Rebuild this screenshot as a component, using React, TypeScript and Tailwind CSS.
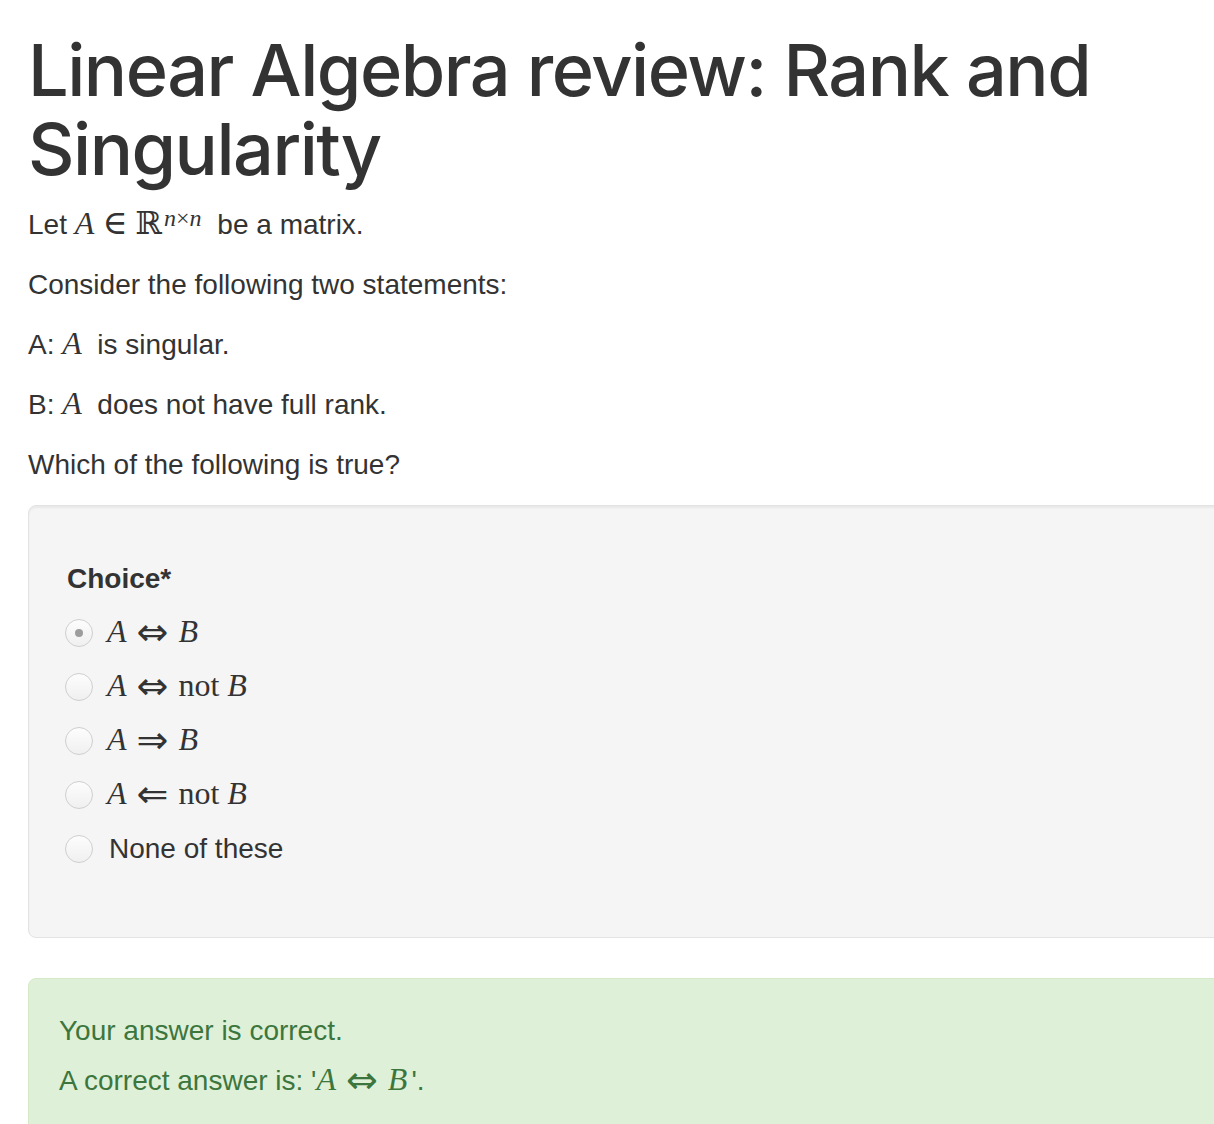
import React from "react";

const M = ({ children }: { children: React.ReactNode }) => (
  <span className="font-['Liberation_Serif','DejaVu_Serif',serif] text-[32px] leading-none">{children}</span>
);

const I = ({ children }: { children: React.ReactNode }) => <span className="italic">{children}</span>;

const Op = ({ children, small }: { children: React.ReactNode; small?: boolean }) => (
  <span
    className={
      small
        ? "font-['DejaVu_Serif',serif] text-[34px] leading-[0] mx-[8px] not-italic"
        : "font-['DejaVu_Sans',serif] text-[38px] leading-[0] mx-[10px] not-italic relative top-[3px]"
    }
  >
    {children}
  </span>
);

const Radio = ({ checked, children }: { checked?: boolean; children: React.ReactNode }) => (
  <div className="flex items-center h-[54px]">
    <span className="w-[28px] h-[28px] rounded-full border border-[#cfcfcf] bg-gradient-to-b from-[#fdfdfd] to-[#f0f0f0] flex items-center justify-center ml-[-2px] mr-[14px]">
      {checked && <span className="w-[8px] h-[8px] rounded-full bg-[#9d9d9d]" />}
    </span>
    <span>{children}</span>
  </div>
);

export default function App() {
  return (
    <div className="w-[1214px] overflow-hidden bg-white">
      <div className="w-[1280px] pl-[28px] font-['Liberation_Sans',Arial,sans-serif] text-[28px] leading-[40px] text-[#333]">
        <h1 className="w-[1150px] font-['Inter','Liberation_Sans',sans-serif] text-[72px] leading-[79px] font-medium tracking-[-1.5px] pt-[30px] mb-[17px]">
          Linear Algebra review: Rank and Singularity
        </h1>
        <p className="mb-[20px]">
          Let{" "}
          <M>
            <I>A</I>
            <Op small>∈</Op>ℝ
            <sup className="text-[24px] relative top-[-8px] ml-[2px] mr-[8px]">
              <I>n</I>×<I>n</I>
            </sup>
          </M>{" "}
          be a matrix.
        </p>
        <p className="mb-[20px]">Consider the following two statements:</p>
        <p className="mb-[20px]">
          A: <M><I>A</I></M>&nbsp; is singular.
        </p>
        <p className="mb-[20px]">
          B: <M><I>A</I></M>&nbsp; does not have full rank.
        </p>
        <p className="mb-[20px]">Which of the following is true?</p>
        <div className="border border-[#e3e3e3] bg-[#f5f5f5] rounded-[8px] shadow-[inset_0_2px_2px_rgba(0,0,0,0.05)] pl-[38px] pt-[53px] pb-[61px] mb-[40px]">
          <div className="font-bold mb-[7px]">Choice*</div>
          <Radio checked>
            <M><I>A</I><Op>⇔</Op><I>B</I></M>
          </Radio>
          <Radio>
            <M><I>A</I><Op>⇔</Op>not <I>B</I></M>
          </Radio>
          <Radio>
            <M><I>A</I><Op>⇒</Op><I>B</I></M>
          </Radio>
          <Radio>
            <M><I>A</I><Op>⇐</Op>not <I>B</I></M>
          </Radio>
          <Radio>
            <span className="ml-[2px]">None of these</span>
          </Radio>
        </div>
        <div className="border border-[#d6e9c6] bg-[#dff0d8] rounded-[8px] text-[#3c763d] pl-[30px] pt-[32px] pb-[40px]">
          <p className="mb-[10px]">Your answer is correct.</p>
          <p>
            A correct answer is: '<M><I>A</I><Op>⇔</Op><I>B</I></M>
            <span className="ml-[4px]">'.</span>
          </p>
        </div>
      </div>
    </div>
  );
}
